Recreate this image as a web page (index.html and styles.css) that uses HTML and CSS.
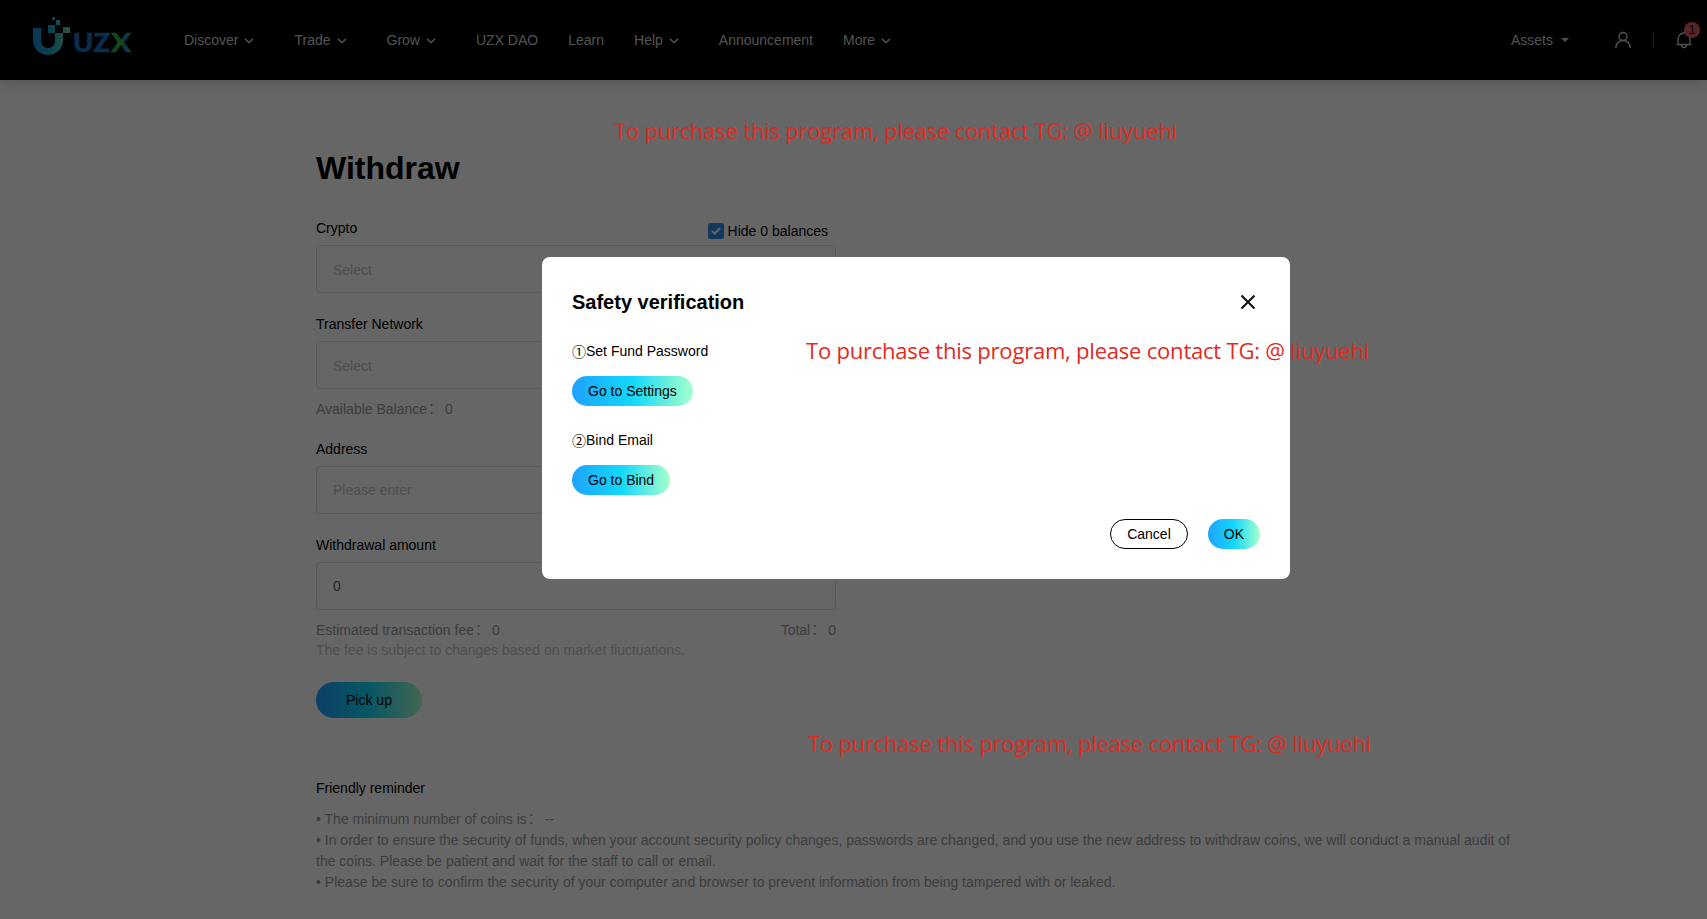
FILE: index.html
```html
<!DOCTYPE html>
<html lang="en">
<head>
<meta charset="utf-8">
<title>Withdraw - UZX</title>
<link rel="stylesheet" href="styles.css">
</head>
<body>
<header class="header">
  <svg class="logo" width="104" height="44" viewBox="0 0 104 44">
    <defs>
      <linearGradient id="mark" gradientUnits="userSpaceOnUse" x1="3" y1="0" x2="40" y2="0">
        <stop offset="0" stop-color="#1a86d8"/><stop offset=".5" stop-color="#18a8c4"/><stop offset="1" stop-color="#80cfa0"/>
      </linearGradient>
      <linearGradient id="xright" x1="0" y1="0" x2="1" y2="0">
        <stop offset="0" stop-color="#2fa84f"/><stop offset=".58" stop-color="#3bb54a"/><stop offset=".62" stop-color="#1c7ccc"/><stop offset="1" stop-color="#2aa890"/>
      </linearGradient>
    </defs>
    <path d="M3 14h8v13a7 7 0 0 0 14 0v-8h8v7.500a15 14.500 0 0 1-30 0z" fill="url(#mark)"/>
    <path d="M18 11h7v8h-7zM26 6h4v5h-4zM22 3h3v3h-3zM33 13h7v6h-7z" fill="url(#mark)"/>
    <text class="wordmark" x="43" y="38" fill="#1c72c0" stroke="#1c72c0" textLength="37" lengthAdjust="spacingAndGlyphs">UZ</text>
    <text class="wordmark" x="81" y="38" fill="url(#xright)" stroke="url(#xright)" textLength="20" lengthAdjust="spacingAndGlyphs">X</text>
  </svg>
  <nav class="nav">
    <a class="nav-item">Discover<svg class="chev" viewBox="0 0 10 6"><path d="M1 .8l4 4 4-4"/></svg></a>
    <a class="nav-item">Trade<svg class="chev" viewBox="0 0 10 6"><path d="M1 .8l4 4 4-4"/></svg></a>
    <a class="nav-item">Grow<svg class="chev" viewBox="0 0 10 6"><path d="M1 .8l4 4 4-4"/></svg></a>
    <a class="nav-item">UZX DAO</a>
    <a class="nav-item">Learn</a>
    <a class="nav-item">Help<svg class="chev" viewBox="0 0 10 6"><path d="M1 .8l4 4 4-4"/></svg></a>
    <a class="nav-item">Announcement</a>
    <a class="nav-item">More<svg class="chev" viewBox="0 0 10 6"><path d="M1 .8l4 4 4-4"/></svg></a>
  </nav>
  <div class="tools">
    <span class="assets">Assets<i class="caret"></i></span>
    <svg class="user" width="18" height="18" viewBox="0 0 18 18"><circle cx="9" cy="5.500" r="4"/><path d="M1.800 17c0-4.400 3-7.500 7.200-7.500s7.200 3.100 7.200 7.500"/></svg>
    <i class="divider"></i>
    <span class="bell">
      <svg width="18" height="18" viewBox="0 0 18 18"><path d="M1.500 13.500h15M3 13.500V8a6 6 0 0 1 12 0v5.500M6.500 14a2.500 2.500 0 0 0 5 0M9 2V.8"/></svg>
      <b class="badge">1</b>
    </span>
  </div>
</header>

<main class="page">
  <h1 class="title">Withdraw</h1>
  <section class="form">
    <div class="label-row">
      <span class="label">Crypto</span>
      <span class="check"><i class="box"><svg width="10" height="8" viewBox="0 0 10 8"><path d="M1 4l2.700 2.600L9 1"/></svg></i>Hide 0 balances</span>
    </div>
    <div class="input select">Select</div>
    <div class="label gap">Transfer Network</div>
    <div class="input select">Select</div>
    <div class="note balance"><span>Available Balance<span class="colon">：</span><span class="num">0</span></span></div>
    <div class="label address">Address</div>
    <div class="input placeholder">Please enter</div>
    <div class="label gap">Withdrawal amount</div>
    <div class="input">0</div>
    <div class="note fee"><span>Estimated transaction fee<span class="colon">：</span><span class="num">0</span></span><span>Total<span class="colon">：</span><span class="num">0</span></span></div>
    <div class="hint">The fee is subject to changes based on market fluctuations.</div>
    <button class="btn pickup">Pick up</button>
  </section>
  <section class="reminder">
    <div class="label">Friendly reminder</div>
    <div class="tips">
      <p>• The minimum number of coins is<span class="colon">：</span><span class="num">--</span></p>
      <p>• In order to ensure the security of funds, when your account security policy changes, passwords are changed, and you use the new address to withdraw coins, we will conduct a manual audit of the coins. Please be patient and wait for the staff to call or email.</p>
      <p>• Please be sure to confirm the security of your computer and browser to prevent information from being tampered with or leaked.</p>
    </div>
  </section>
</main>

<div class="overlay">
  <div class="modal">
    <div class="modal-head">
      <h2>Safety verification</h2>
      <svg class="close" width="16" height="16" viewBox="0 0 16 16"><path d="M1.500 1.500l13 13M14.500 1.500l-13 13"/></svg>
    </div>
    <div class="step"><span class="circled">①</span>Set Fund Password</div>
    <button class="btn">Go to Settings</button>
    <div class="step"><span class="circled">②</span>Bind Email</div>
    <button class="btn">Go to Bind</button>
    <div class="modal-foot">
      <button class="btn cancel">Cancel</button>
      <button class="btn">OK</button>
    </div>
  </div>
</div>

<div class="watermark wm-top">To purchase this program, please contact TG: @ liuyuehi</div>
<div class="watermark wm-mid">To purchase this program, please contact TG: @ liuyuehi</div>
<div class="watermark wm-low">To purchase this program, please contact TG: @ liuyuehi</div>
</body>
</html>
```

FILE: styles.css
```css
* { box-sizing: border-box; }
body {
  margin: 0;
  height: 919px;
  overflow: hidden;
  background: #fff;
  color: #000;
  font: 14px/20px "Liberation Sans", "Noto Sans CJK SC", sans-serif;
}
h1, h2, p { margin: 0; }

.header {
  height: 80px;
  padding: 0 14px 0 30px;
  display: flex;
  align-items: center;
  background: #000;
  color: #ccc;
  box-shadow: 0 2px 12px rgba(0, 0, 0, .2);
}
.logo { margin-top: -8px; }
.wordmark { font: 900 27px Lato, sans-serif; stroke-width: .4; }
.nav { display: flex; gap: 30px; margin-left: 50px; }
.nav-item { display: flex; align-items: center; }
.chev {
  width: 10px;
  height: 6px;
  margin: 2px 10px 0 6px;
  fill: none;
  stroke: #ccc;
  stroke-width: 1.500;
}
.tools { display: flex; align-items: center; margin-left: auto; }
.assets { display: flex; align-items: center; }
.caret {
  margin-left: 8px;
  border: 4.500px solid transparent;
  border-top-color: #ccc;
  border-bottom: 0;
}
.user { margin-left: 45px; fill: none; stroke: #ccc; stroke-width: 1.400; }
.divider { width: 1px; height: 16px; margin: 0 21px 0 21px; background: #444; }
.bell { position: relative; display: flex; fill: none; stroke: #ccc; stroke-width: 1.300; }
.badge {
  position: absolute;
  left: 9px;
  top: -9px;
  width: 16px;
  height: 16px;
  border-radius: 8px;
  background: #d8605f;
  color: #000;
  font: 12px/16px "Liberation Sans", sans-serif;
  text-align: center;
}

.page { width: 1516px; padding: 69px 0 0 316px; }
.title { font-size: 32px; line-height: 38px; }
.form { width: 520px; margin-top: 31px; }
.label-row { display: flex; justify-content: space-between; height: 27px; }
.check { display: flex; align-items: center; height: 20px; gap: 4px; margin: 3px 8px 0 0; }
.box {
  display: flex;
  align-items: center;
  justify-content: center;
  width: 16px;
  height: 16px;
  border-radius: 2px;
  background: #2f8de4;
}
.box svg { fill: none; stroke: #fff; stroke-width: 2; }
.input {
  height: 48px;
  padding: 0 16px;
  border: 1px solid #dcdfe6;
  border-radius: 4px;
  line-height: 46px;
  color: #606266;
}
.placeholder, .select { color: #c0c4cc; }
.select { line-height: 48px; }
.gap { margin: 21px 0 7px; }
.note { display: flex; justify-content: space-between; height: 20px; color: #999; }
.num { margin-left: 4px; }
.colon { position: relative; left: 1px; top: -1px; }
.balance { margin-top: 10px; }
.address { margin: 20px 0 7px; }
.fee { margin-top: 10px; }
.hint { color: #c4c4c4; }
.btn {
  flex: none;
  height: 30px;
  padding: 0 16px;
  border: 0;
  border-radius: 18px;
  background: linear-gradient(90deg, #1fa2ff, #12d8fa 50%, #a6ffcb);
  color: #000;
  font: inherit;
}
.pickup { display: block; width: 106px; height: 36px; margin-top: 22px; }
.reminder { margin-top: 60px; }
.tips { margin-top: 11px; line-height: 21px; color: #999; }

.overlay {
  position: absolute;
  inset: 0 0 auto 0;
  height: 919px;
  padding: 257px 0 0 542px;
  background: rgba(0, 0, 0, .6);
}
.modal {
  display: flex;
  flex-direction: column;
  align-items: flex-start;
  width: 748px;
  height: 322px;
  padding: 30px;
  border-radius: 8px;
  background: #fff;
}
.modal-head {
  display: flex;
  justify-content: space-between;
  align-items: center;
  width: 100%;
  height: 30px;
  padding-right: 4px;
}
.modal-head h2 { font-size: 20px; line-height: 30px; }
.close { fill: none; stroke: #111; stroke-width: 2.100; }
.step { height: 20px; margin: 24px 0 15px; white-space: nowrap; }
.circled { position: relative; top: 1px; display: inline-block; width: 14px; line-height: 16px; }
.modal-foot { display: flex; gap: 20px; margin: 24px 0 0 auto; }
.cancel { border: 1px solid #000; background: #fff; }

.watermark {
  position: absolute;
  color: #e22a20;
  font: 22px/30px "Open Sans", sans-serif;
  letter-spacing: -.21px;
  white-space: nowrap;
}
.wm-top { left: 614px; top: 115px; }
.wm-mid { left: 806px; top: 335px; }
.wm-low { left: 808px; top: 728px; }
```
